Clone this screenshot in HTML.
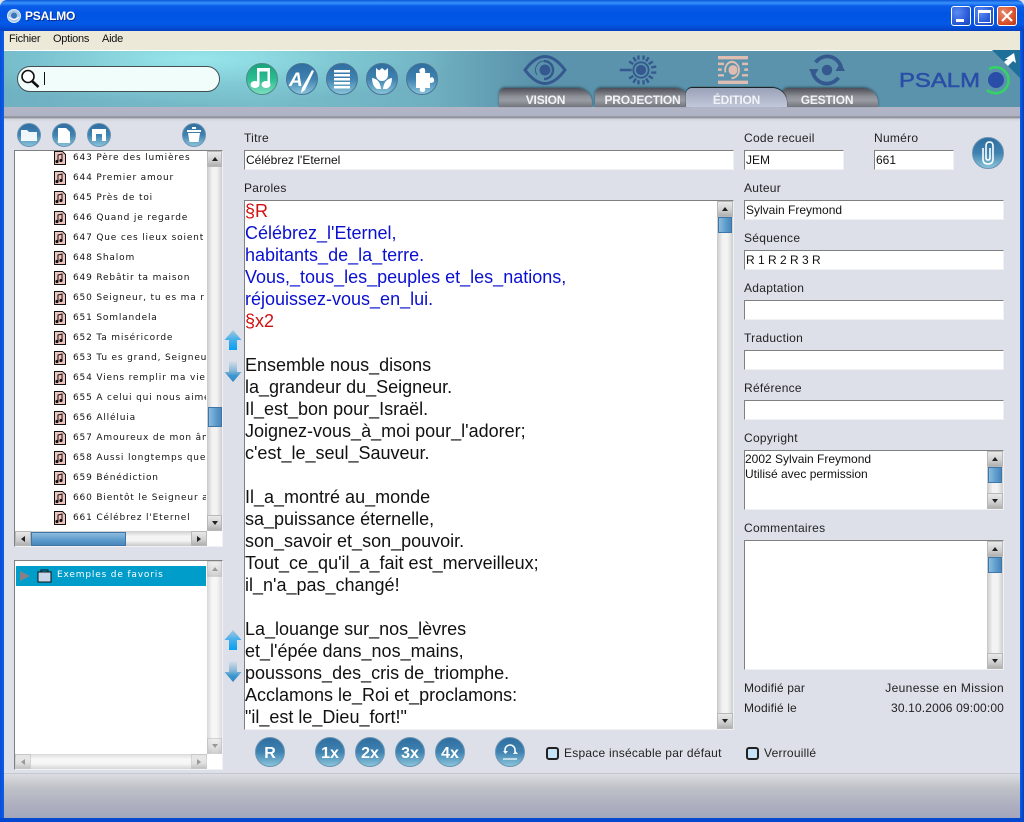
<!DOCTYPE html>
<html lang="fr"><head><meta charset="utf-8"><title>PSALMO</title>
<style>
html,body{margin:0;padding:0;width:1024px;height:822px;overflow:hidden;background:#dde0e9}
div,pre,span,svg{position:absolute;box-sizing:border-box}
body{font-family:"Liberation Sans",sans-serif;font-size:12px;color:#111}
#title{left:0;top:0;width:1024px;height:31px;background:linear-gradient(#0a56d8 0,#3a93fb 3px,#0a5de8 6px,#0054e3 14px,#0458e6 24px,#0348cf 29px,#0340b8 31px);border-radius:7px 7px 0 0}
.wb{width:20px;height:20px;top:6px;border:1px solid #fff;border-radius:3px;background:radial-gradient(circle at 30% 30%,#5c8cf0,#2a5bd8 60%,#1a44b8)}
.lb{white-space:nowrap;letter-spacing:.28px;font-size:12px;line-height:14px;color:#222}
.f{background:#fff;border:1px solid #f0f1f5;border-top-color:#808080;border-left-color:#808080;white-space:pre;line-height:18px;padding-left:1px;font-size:12px;letter-spacing:0;color:#111}
.li{left:73px;white-space:nowrap;font-family:"DejaVu Sans",sans-serif;font-size:9px;letter-spacing:.83px;line-height:14px;color:#111;width:133px;overflow:hidden}
.vt{background:linear-gradient(90deg,#c9c9c9,#f3f3f3 35%,#f3f3f3 65%,#cfcfcf)}
.ht{background:linear-gradient(#cfcfcf,#f5f5f5 35%,#f3f3f3 65%,#c8c8c8)}
.bt{background:linear-gradient(#e8e8e8,#cfcfcf 60%,#b0b0b0);border:1px solid #b8b8b8;width:16px;height:16px}
.th{background:linear-gradient(90deg,#8cbbdd,#5b9bcb 60%,#4a86ba);border:1px solid #3f76a8}
.tu,.td,.tl,.tr{width:0;height:0}
.tab{top:88px;height:19px;color:#f2f3f6;font-weight:bold;font-size:12px;letter-spacing:-.2px;text-align:center;line-height:24px;border-radius:6px 15px 0 0;background:linear-gradient(#4c4d56,#8e9098 45%,#9a9ca4 65%,#73757e);box-shadow:0 -1px 2px rgba(20,40,50,.55)}
</style></head><body>

<div id="title"></div>
<div style="left:0;top:31px;width:4px;height:791px;background:linear-gradient(90deg,#0a4fd0,#0a5df0)"></div>
<div style="left:1020px;top:31px;width:4px;height:791px;background:linear-gradient(90deg,#0a5df0,#0340b8)"></div>
<div style="left:0;top:818px;width:1024px;height:4px;background:#0348cf"></div>

<svg style="left:7px;top:9px" width="14" height="14" viewBox="0 0 14 14"><circle cx="7" cy="7" r="6.5" fill="#a9c8e8" stroke="#dfeaf6"/><circle cx="7" cy="6.5" r="3" fill="#3c76b8"/><path d="M2 8q5 5 10 0" fill="none" stroke="#fff"/></svg>
<div style="left:25px;top:9px;color:#fff;font-weight:bold;font-size:12px;letter-spacing:-.2px;line-height:15px;text-shadow:1px 1px 0 #0a2f90">PSALMO</div>

<div class="wb" style="left:951px"><div style="left:4px;top:12px;width:8px;height:3px;background:#fff"></div></div>
<div class="wb" style="left:974px"><div style="left:3px;top:3px;width:13px;height:13px;border:1px solid #fff;border-top-width:3px"></div></div>
<div class="wb" style="left:997px;background:radial-gradient(circle at 30% 30%,#ec8a6c,#d8512c 60%,#b83a18)"><svg style="left:3px;top:3px" width="12" height="12" viewBox="0 0 12 12"><path d="M1 1l10 10M11 1L1 11" stroke="#fff" stroke-width="2.2"/></svg></div>

<div style="left:4px;top:31px;width:1016px;height:19px;background:#ece9d8"></div>
<div style="left:9px;top:32px;line-height:15px;font-size:11px;letter-spacing:-.25px;color:#111;white-space:pre">Fichier</div>
<div style="left:53px;top:32px;line-height:15px;font-size:11px;letter-spacing:-.25px;color:#111;white-space:pre">Options</div>
<div style="left:102px;top:32px;line-height:15px;font-size:11px;letter-spacing:-.25px;color:#111;white-space:pre">Aide</div>

<div style="left:4px;top:50px;width:1016px;height:57px;border-top:1px solid #fff;background:radial-gradient(ellipse 260px 45px at 190px 8px,rgba(158,238,242,.85) 0,rgba(140,220,228,.4) 60%,rgba(91,147,172,0) 100%),linear-gradient(90deg,#6fb1c2,#78bdca 25%,#6fb0c0 42%,#5b93ac 52%)"></div>

<div style="left:17px;top:66px;width:203px;height:26px;border-radius:13px;background:#f1fdfb;border:1.5px solid #444f54"></div>
<svg style="left:19px;top:68px" width="22" height="21" viewBox="0 0 22 21"><circle cx="9" cy="8.5" r="6" fill="#fff" stroke="#111" stroke-width="1.600"/><path d="M13 13l6.500 6" stroke="#111" stroke-width="2.600"/></svg>
<div style="left:44px;top:72px;width:1px;height:13px;background:#111"></div>

<svg style="left:246px;top:63px" width="192" height="32" viewBox="0 0 192 32">
<defs>
<linearGradient id="bl" x1="0" y1="0" x2="0" y2="1"><stop offset="0" stop-color="#2e6ea0"/><stop offset=".5" stop-color="#3f82b0"/><stop offset="1" stop-color="#8cc6dc"/></linearGradient>
<linearGradient id="gr" x1="0" y1="0" x2="0" y2="1"><stop offset="0" stop-color="#17a47c"/><stop offset=".5" stop-color="#2bbd92"/><stop offset="1" stop-color="#7fe0c0"/></linearGradient>
</defs>
<circle cx="16" cy="16" r="15.500" fill="url(#gr)" stroke="#4d8a82"/>
<circle cx="56" cy="16" r="15.500" fill="url(#bl)" stroke="#4a7496"/>
<circle cx="96" cy="16" r="15.500" fill="url(#bl)" stroke="#4a7496"/>
<circle cx="136" cy="16" r="15.500" fill="url(#bl)" stroke="#4a7496"/>
<circle cx="176" cy="16" r="15.500" fill="url(#bl)" stroke="#4a7496"/>
<g fill="#fff">
<ellipse cx="9" cy="21.500" rx="4.500" ry="3.500"/><ellipse cx="20" cy="21.500" rx="4.500" ry="3.500"/>
<path d="M11 21.500V5h13v16.500h-2.500V8.500h-8v13z"/>
<path d="M66 7l2 1-9 19-4 3 1-5z"/>
<path d="M88 7h16v2.500H88zm0 4h16v2.500H88zm0 4h16v2.500H88zm0 4h16v2.500H88zm0 4h16v2.500H88z"/>
<path d="M130 5l3 2.500 3-2.500 3 2.500 3-2.500v7a6 6 0 0 1-12 0z"/>
<path d="M126 15q8 1 9 11h-4q-5-3-5-11zm20 0q-8 1-9 11h4q5-3 5-11z"/>
<path d="M170 10h4q-2-4 2-5t3 5h5v5q3-2 4 1.500t-4 3.500v5h-5q1 4-2.500 4t-2.500-4h-4z"/>
<text x="43" y="23" font-family="Liberation Sans,sans-serif" font-size="19" font-weight="bold" font-style="italic">A</text>
</g>
</svg>

<svg style="left:520px;top:52px" width="340" height="36" viewBox="0 0 340 36" fill="none">
<g stroke="#35598f" transform="translate(25,18)">
<path d="M-20 0Q0-27 20 0 0 27-20 0z" stroke-width="3"/><path d="M-1-9A9 9 0 1 1-1 9" stroke-width="2.500"/><path d="M-1-9A9 9 0 0 0-8 5" stroke-width="1"/><circle r="5" fill="#35598f"/>
</g>
<g stroke="#35598f" transform="translate(121,18) scale(.85)">
<circle r="9" stroke-width="2.200"/><circle r="5.500" fill="#35598f"/>
<path d="M-25 0h14" stroke-width="3"/>
<path d="M-3-17v5M3-17v5M9-15l-3 5M14-10l-5 3M18-4l-6 1M18 3l-6 0M14 10l-5-3M9 15l-3-5M3 17v-5M-3 17v-5M-9 15l3-5M-14 10l5-3M-14-10l5 3M-9-15l3 5" stroke-width="2.800"/>
</g>
<g transform="translate(213,18) scale(.75,.82)">
<path d="M-20-17h40v4h-40zM-20-9h8v3h-8zM12-9h8v3h-8zM-20-2h5v3h-5zM15-2h5v3h-5zM-20 5h8v3h-8zM12 5h8v3h-8zM-20 13h40v4h-40z" fill="#dfbdb0"/>
<circle r="6" fill="#dfbdb0"/><path d="M-2-10A10 10 0 1 1-2 10M-2-10A10 10 0 0 0-10 3" stroke="#dfbdb0" stroke-width="2.500"/>
</g>
<g transform="translate(307,18) scale(.95)">
<circle r="5.500" fill="#35598f"/>
<path d="M-12-8A15 15 0 0 1 15-2M12 8A15 15 0 0 1-15 2" stroke="#35598f" stroke-width="4"/>
<path d="M-19-1h10l-5 9zM19 1H9l5-9z" fill="#35598f"/>
</g>
</svg>

<div style="left:4px;top:107px;width:1016px;height:15px;background:linear-gradient(#b2b6c6 0,#aeb2c3 9px,#85878f 10px,#9c9fa9 11px,#d2d4dc 12px,#dde0e9 15px)"></div>

<div class="tab" style="left:499px;width:93px">VISION</div>
<div class="tab" style="left:595px;width:95px">PROJECTION</div>
<div class="tab" style="left:782px;width:96px;padding-right:6px">GESTION</div>
<div class="tab" style="left:686px;width:101px;background:linear-gradient(#9aa2b9,#aeb5c9 50%,#c0c8da);box-shadow:0 -1px 1px #111">ÉDITION</div>

<svg style="left:890px;top:50px" width="130" height="48" viewBox="0 0 130 48">
<path d="M102 0h28v28z" fill="#1e6f9a"/><path d="M115 9l9-6 2 10-3-2-5 5-4-4 4-3z" fill="#fff"/>
<text x="9" y="37" font-family="Liberation Sans,sans-serif" font-size="20" fill="#2a4ea8" stroke="#2a4ea8" stroke-width=".5" textLength="81" lengthAdjust="spacingAndGlyphs">PSALM</text>
<circle cx="106" cy="30" r="8" fill="#2a4ea8"/>
<path d="M99 19A13 13 0 1 1 97 40" fill="none" stroke="#34d463" stroke-width="2.500"/>
</svg>

<div style="left:4px;top:773px;width:1016px;height:45px;border-top:1px solid #c5c7cf;background:linear-gradient(#dcdde2,#c0c2c8 30%,#aeb0c0 70%,#a4a6bc)"></div>

<svg style="left:17px;top:123px" width="190" height="25" viewBox="0 0 190 25">
<g fill="url(#bl)" stroke="#6b94b4"><circle cx="12" cy="12" r="11.500"/><circle cx="47" cy="12" r="11.500"/><circle cx="82" cy="12" r="11.500"/><circle cx="177" cy="12" r="11.500"/></g>
<g fill="#fff">
<path d="M4 7h6l2 2h8v9H4z" opacity=".92"/>
<path d="M41 5h8l4 4v11H41z"/>
<path d="M75 6h14v12H75zM79 11v7h6v-7z" fill-rule="evenodd"/>
<path d="M170 7h14v2h-14zM175 4h4v2h-4zM171 10h12l-1.500 9h-9z"/>
</g></svg>

<div style="left:14px;top:150px;width:209px;height:397px;background:#fff;border-top:1px solid #808080;border-left:1px solid #808080;border-right:1px solid #f0f1f5;border-bottom:1px solid #f0f1f5"></div>
<div class="li" style="top:151px">643 Père des lumières</div>
<div class="li" style="top:171px">644 Premier amour</div>
<div class="li" style="top:191px">645 Près de toi</div>
<div class="li" style="top:211px">646 Quand je regarde</div>
<div class="li" style="top:231px">647 Que ces lieux soient</div>
<div class="li" style="top:251px">648 Shalom</div>
<div class="li" style="top:271px">649 Rebâtir ta maison</div>
<div class="li" style="top:291px">650 Seigneur, tu es ma r</div>
<div class="li" style="top:311px">651 Somlandela</div>
<div class="li" style="top:331px">652 Ta miséricorde</div>
<div class="li" style="top:351px">653 Tu es grand, Seigneur</div>
<div class="li" style="top:371px">654 Viens remplir ma vie</div>
<div class="li" style="top:391px">655 A celui qui nous aime</div>
<div class="li" style="top:411px">656 Alléluia</div>
<div class="li" style="top:431px">657 Amoureux de mon âme</div>
<div class="li" style="top:451px">658 Aussi longtemps que</div>
<div class="li" style="top:471px">659 Bénédiction</div>
<div class="li" style="top:491px">660 Bientôt le Seigneur a</div>
<div class="li" style="top:511px">661 Célébrez l'Eternel</div>

<svg style="left:54px;top:151px" width="12" height="374" viewBox="0 0 12 374">
<defs><g id="n"><path d="M.5.5h8l3 3v10h-11z" fill="#eec4bc" stroke="#111"/><path d="M4 10V4l4-1v6" fill="none" stroke="#111"/><circle cx="3" cy="10.500" r="1.600" fill="#111"/><circle cx="7" cy="9.500" r="1.600" fill="#111"/></g></defs>
<use href="#n"/><use href="#n" y="20"/><use href="#n" y="40"/><use href="#n" y="60"/><use href="#n" y="80"/><use href="#n" y="100"/><use href="#n" y="120"/><use href="#n" y="140"/><use href="#n" y="160"/><use href="#n" y="180"/><use href="#n" y="200"/><use href="#n" y="220"/><use href="#n" y="240"/><use href="#n" y="260"/><use href="#n" y="280"/><use href="#n" y="300"/><use href="#n" y="320"/><use href="#n" y="340"/><use href="#n" y="360"/>
</svg>

<div class="vt" style="left:207px;top:151px;width:15px;height:379px"></div>
<div class="bt" style="left:207px;top:151px;width:15px"></div>
<div class="tu" style="left:212px;top:157px;border:3px solid transparent;border-top:0;border-bottom:4px solid #222"></div>
<div class="th" style="left:208px;top:407px;width:14px;height:20px"></div>
<div class="bt" style="left:207px;top:515px;width:15px"></div>
<div class="td" style="left:212px;top:521px;border:3px solid transparent;border-bottom:0;border-top:4px solid #222"></div>
<div class="ht" style="left:15px;top:531px;width:192px;height:15px"></div>
<div class="bt" style="left:15px;top:531px;height:15px"></div>
<div class="tl" style="left:21px;top:536px;border:3px solid transparent;border-left:0;border-right:4px solid #222"></div>
<div class="th" style="left:31px;top:532px;width:95px;height:14px;background:linear-gradient(#8cbbdd,#5b9bcb 60%,#4a86ba)"></div>
<div class="bt" style="left:191px;top:531px;height:15px"></div>
<div class="tr" style="left:197px;top:536px;border:3px solid transparent;border-right:0;border-left:4px solid #222"></div>

<div style="left:14px;top:560px;width:209px;height:210px;background:#fff;border-top:1px solid #808080;border-left:1px solid #808080;border-right:1px solid #f0f1f5;border-bottom:1px solid #f0f1f5"></div>
<div style="left:16px;top:566px;width:190px;height:20px;background:#009dcb"></div>
<div class="tr" style="left:20px;top:571px;border:5.500px solid transparent;border-right:0;border-left:10px solid #8a7f86"></div>
<svg style="left:37px;top:569px" width="15" height="14" viewBox="0 0 15 14"><path d="M1 3h13v10H1z" fill="#c8d6ea" stroke="#111"/><path d="M4 3V1h7v2" fill="none" stroke="#111"/></svg>
<div class="li" style="top:568px;left:57px;color:#fff;width:140px">Exemples de favoris</div>

<div class="vt" style="left:207px;top:561px;width:15px;height:193px;opacity:.75"></div>
<div class="bt" style="left:207px;top:561px;width:15px;opacity:.55"></div>
<div class="tu" style="left:212px;top:567px;border:3px solid transparent;border-top:0;border-bottom:4px solid #999"></div>
<div class="bt" style="left:207px;top:738px;width:15px;opacity:.55"></div>
<div class="td" style="left:212px;top:744px;border:3px solid transparent;border-bottom:0;border-top:4px solid #999"></div>
<div class="ht" style="left:15px;top:754px;width:192px;height:15px;opacity:.75"></div>
<div class="bt" style="left:15px;top:754px;height:15px;opacity:.55"></div>
<div class="tl" style="left:21px;top:759px;border:3px solid transparent;border-left:0;border-right:4px solid #999"></div>
<div class="bt" style="left:191px;top:754px;height:15px;opacity:.55"></div>
<div class="tr" style="left:197px;top:759px;border:3px solid transparent;border-right:0;border-left:4px solid #999"></div>

<svg style="left:224px;top:330px" width="18" height="354" viewBox="0 0 18 354">
<defs><linearGradient id="au" x1="0" y1="0" x2="0" y2="1"><stop offset="0" stop-color="#a8c8dc"/><stop offset=".45" stop-color="#4cb0ea"/><stop offset="1" stop-color="#05a0f0"/></linearGradient><linearGradient id="ad" x1="0" y1="0" x2="0" y2="1"><stop offset="0" stop-color="#d8dfe8"/><stop offset=".45" stop-color="#8ab8d8"/><stop offset=".7" stop-color="#3c96d0"/><stop offset="1" stop-color="#2e88c4"/></linearGradient>
<path id="up" d="M9 0l8.500 10H13v10H5V10H.5z"/><path id="dn" d="M5 0h8v11h4.500L9 21 .5 11H5z"/></defs>
<use href="#up" fill="url(#au)"/><use href="#dn" y="31" fill="url(#ad)"/>
<use href="#up" y="300" fill="url(#au)"/><use href="#dn" y="331" fill="url(#ad)"/>
</svg>

<div class="lb" style="left:244px;top:131px">Titre</div>
<div class="f" style="left:244px;top:150px;width:490px;height:20px">Célébrez l'Eternel</div>
<div class="lb" style="left:244px;top:181px">Paroles</div>

<div style="left:244px;top:200px;width:490px;height:530px;background:#fff;border-top:1px solid #808080;border-left:1px solid #808080;border-right:1px solid #f0f1f5;border-bottom:1px solid #f0f1f5;overflow:hidden"></div>
<pre style="left:245px;top:200px;margin:0;font-family:'Liberation Sans',sans-serif;font-size:18px;line-height:22px;color:#111"><span style="position:static;color:#d01010">§R</span>
<span style="position:static;color:#0a10d0">Célébrez_l'Eternel,
habitants_de_la_terre.
Vous,_tous_les_peuples et_les_nations,
réjouissez-vous_en_lui.</span>
<span style="position:static;color:#d01010">§x2</span>

Ensemble nous_disons
la_grandeur du_Seigneur.
Il_est_bon pour_Israël.
Joignez-vous_à_moi pour_l'adorer;
c'est_le_seul_Sauveur.

Il_a_montré au_monde
sa_puissance éternelle,
son_savoir et_son_pouvoir.
Tout_ce_qu'il_a_fait est_merveilleux;
il_n'a_pas_changé!

La_louange sur_nos_lèvres
et_l'épée dans_nos_mains,
poussons_des_cris de_triomphe.
Acclamons le_Roi et_proclamons:
"il_est le_Dieu_fort!"</pre>

<div class="vt" style="left:717px;top:201px;width:16px;height:528px"></div>
<div class="bt" style="left:717px;top:201px"></div>
<div class="tu" style="left:722px;top:207px;border:3px solid transparent;border-top:0;border-bottom:4px solid #222"></div>
<div class="th" style="left:718px;top:217px;width:14px;height:16px"></div>
<div class="bt" style="left:717px;top:713px"></div>
<div class="td" style="left:722px;top:719px;border:3px solid transparent;border-bottom:0;border-top:4px solid #222"></div>

<div class="lb" style="left:744px;top:131px">Code recueil</div>
<div class="f" style="left:744px;top:150px;width:100px;height:20px">JEM</div>
<div class="lb" style="left:874px;top:131px">Numéro</div>
<div class="f" style="left:874px;top:150px;width:80px;height:20px">661</div>
<svg style="left:972px;top:137px" width="32" height="32" viewBox="0 0 32 32"><circle cx="16" cy="16" r="15.500" fill="url(#bl)" stroke="#6b94b4"/><path d="M11 11v11q0 5 5 5t5-5V9q0-4-3.500-4T14 9v12q0 2 2 2t2-2V11" fill="none" stroke="#fff" stroke-width="1.600"/></svg>

<div class="lb" style="left:744px;top:181px">Auteur</div>
<div class="f" style="left:744px;top:200px;width:260px;height:20px">Sylvain Freymond</div>
<div class="lb" style="left:744px;top:231px">Séquence</div>
<div class="f" style="left:744px;top:250px;width:260px;height:20px">R 1 R 2 R 3 R</div>
<div class="lb" style="left:744px;top:281px">Adaptation</div>
<div class="f" style="left:744px;top:300px;width:260px;height:20px"></div>
<div class="lb" style="left:744px;top:331px">Traduction</div>
<div class="f" style="left:744px;top:350px;width:260px;height:20px"></div>
<div class="lb" style="left:744px;top:381px">Référence</div>
<div class="f" style="left:744px;top:400px;width:260px;height:20px"></div>
<div class="lb" style="left:744px;top:431px">Copyright</div>
<div class="f" style="left:744px;top:450px;width:260px;height:60px;line-height:15px;padding:1px 0 0 0">2002 Sylvain Freymond
Utilisé avec permission</div>
<div class="vt" style="left:987px;top:451px;width:16px;height:58px"></div>
<div class="bt" style="left:987px;top:451px"></div>
<div class="tu" style="left:992px;top:457px;border:3px solid transparent;border-top:0;border-bottom:4px solid #222"></div>
<div class="th" style="left:988px;top:467px;width:14px;height:16px"></div>
<div class="bt" style="left:987px;top:493px"></div>
<div class="td" style="left:992px;top:499px;border:3px solid transparent;border-bottom:0;border-top:4px solid #222"></div>

<div class="lb" style="left:744px;top:521px">Commentaires</div>
<div class="f" style="left:744px;top:540px;width:260px;height:130px"></div>
<div class="vt" style="left:987px;top:541px;width:16px;height:128px"></div>
<div class="bt" style="left:987px;top:541px"></div>
<div class="tu" style="left:992px;top:547px;border:3px solid transparent;border-top:0;border-bottom:4px solid #222"></div>
<div class="th" style="left:988px;top:557px;width:14px;height:16px"></div>
<div class="bt" style="left:987px;top:653px"></div>
<div class="td" style="left:992px;top:659px;border:3px solid transparent;border-bottom:0;border-top:4px solid #222"></div>

<div class="lb" style="left:744px;top:681px;letter-spacing:.15px">Modifié par</div>
<div class="lb" style="left:804px;width:200px;text-align:right;top:681px;letter-spacing:.35px">Jeunesse en Mission</div>
<div class="lb" style="left:744px;top:701px;letter-spacing:.15px">Modifié le</div>
<div class="lb" style="left:804px;width:200px;text-align:right;top:701px;letter-spacing:.15px">30.10.2006 09:00:00</div>

<svg style="left:254px;top:737px" width="272" height="32" viewBox="0 0 272 32">
<g fill="url(#bl)" stroke="#6b94b4"><circle cx="16" cy="15" r="14.500"/><circle cx="76" cy="15" r="14.500"/><circle cx="116" cy="15" r="14.500"/><circle cx="156" cy="15" r="14.500"/><circle cx="196" cy="15" r="14.500"/><circle cx="256" cy="15" r="14.500"/></g>
<g font-family="Liberation Sans,sans-serif" font-size="16" font-weight="bold" fill="#fff" text-anchor="middle">
<text x="16" y="21">R</text><text x="76" y="21">1x</text><text x="116" y="21">2x</text><text x="156" y="21">3x</text><text x="196" y="21">4x</text></g>
<path d="M251 16v-3a5 5 0 0 1 10 0v3" fill="none" stroke="#fff" stroke-width="1.500"/><path d="M249 14l2.500 3 2.500-3zM259 17l2.500-3 2.500 3z" fill="#fff"/><path d="M249 22h14" stroke="#fff" stroke-width="1.200"/>
</svg>

<div style="left:546px;top:747px;width:13px;height:13px;background:#c5e4f8;border:2px solid #222;border-radius:3px"></div>
<div class="lb" style="left:564px;top:746px;letter-spacing:.23px">Espace insécable par défaut</div>
<div style="left:746px;top:747px;width:13px;height:13px;background:#c5e4f8;border:2px solid #222;border-radius:3px"></div>
<div class="lb" style="left:764px;top:746px;letter-spacing:.23px">Verrouillé</div>

</body></html>
